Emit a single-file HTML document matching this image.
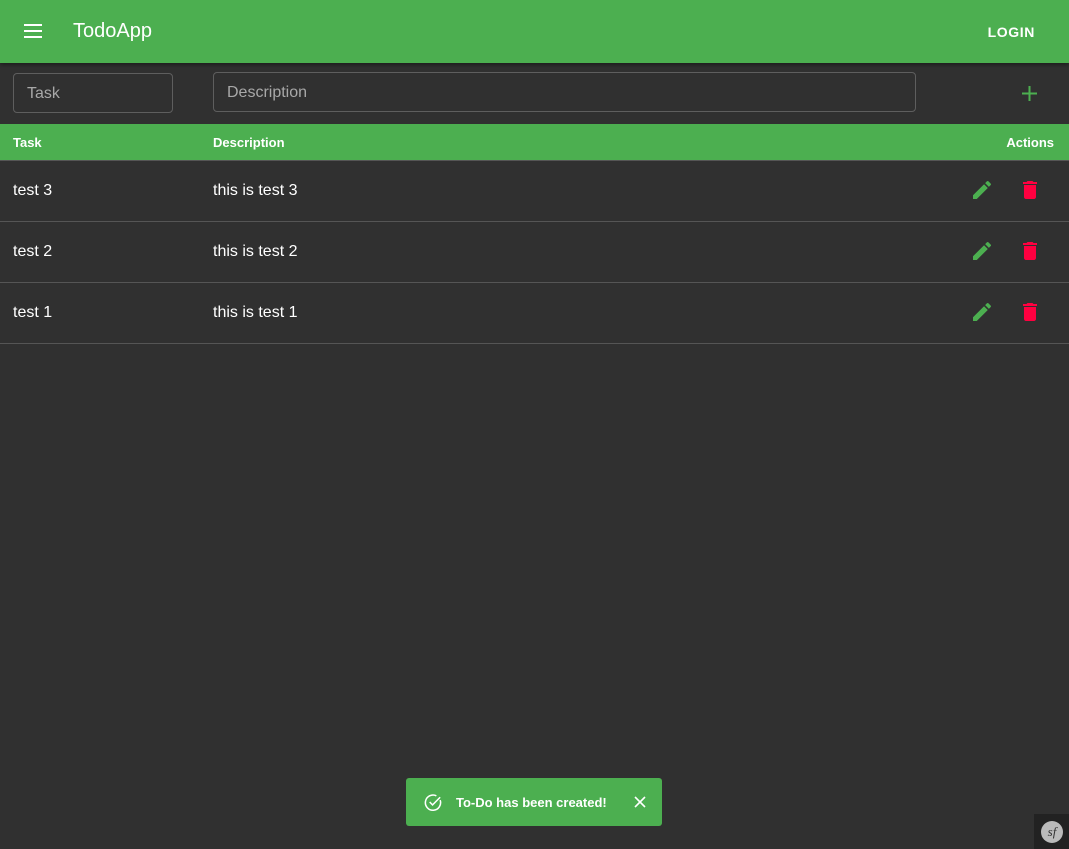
<!DOCTYPE html>
<html><head><meta charset="utf-8"><style>
*{box-sizing:border-box;margin:0;padding:0}
body{width:1069px;height:849px;background:#303030;font-family:"Liberation Sans",sans-serif;color:#fff;position:relative;overflow:hidden}
.bar{position:absolute;left:0;top:0;width:1069px;height:63px;background:#4caf50;box-shadow:0 2px 4px rgba(0,0,0,.4)}
.title{position:absolute;left:73px;top:20px;font-size:20px;font-weight:500}
.login{position:absolute;right:34px;top:24px;font-size:14px;font-weight:bold;letter-spacing:.6px}
.inp{position:absolute;border:1px solid #5e5e5e;border-radius:4px;height:40px;color:#a8a8a8;font-size:16px;padding:11px 13px}
.th{position:absolute;left:0;top:124px;width:1069px;height:37px;background:#4caf50;border-bottom:1px solid #555;font-size:13px;font-weight:bold}
.th span{position:absolute;top:11px}
.row{position:absolute;left:0;width:1069px;height:61px;border-bottom:1px solid #555;font-size:16px}
.row span{position:absolute;top:21px}
.row svg{position:absolute;top:17px}
.toast{position:absolute;left:406px;top:778px;width:256px;height:48px;background:#4caf50;border-radius:3px;font-size:13px;font-weight:bold}
</style></head><body>
<div class="bar">
<svg style="position:absolute;left:24px;top:24px" width="18" height="14" viewBox="0 0 18 14"><rect y="0" width="18" height="2" fill="#fff"/><rect y="6" width="18" height="2" fill="#fff"/><rect y="12" width="18" height="2" fill="#fff"/></svg>
<div class="title">TodoApp</div><div class="login">LOGIN</div></div>
<div class="inp" style="left:13px;top:73px;width:160px">Task</div>
<div class="inp" style="left:213px;top:72px;width:703px">Description</div>
<svg style="position:absolute;left:1022px;top:86px" width="15" height="15" viewBox="0 0 15 15"><rect x="6.5" width="2" height="15" fill="#4caf50"/><rect y="6.5" width="15" height="2" fill="#4caf50"/></svg>
<div class="th"><span style="left:13px">Task</span><span style="left:213px">Description</span><span style="right:15px">Actions</span></div>
<div class="row" style="top:161px"><span style="left:13px">test 3</span><span style="left:213px">this is test 3</span>
<svg style="left:970px" width="24" height="24" viewBox="0 0 24 24"><path fill="#4caf50" d="M3 17.25V21h3.75L17.81 9.94l-3.75-3.75L3 17.25zM20.710 7.04a1 1 0 000-1.41l-2.34-2.34a1 1 0 00-1.41 0l-1.830 1.83 3.75 3.75 1.83-1.83z"/></svg>
<svg style="left:1018px" width="24" height="24" viewBox="0 0 24 24"><path fill="#ff0040" d="M6 19c0 1.1.9 2 2 2h8c1.1 0 2-.9 2-2V7H6v12zM19 4h-3.5l-1-1h-5l-1 1H5v2h14V4z"/></svg></div>
<div class="row" style="top:222px"><span style="left:13px">test 2</span><span style="left:213px">this is test 2</span>
<svg style="left:970px" width="24" height="24" viewBox="0 0 24 24"><path fill="#4caf50" d="M3 17.25V21h3.75L17.81 9.94l-3.75-3.75L3 17.25zM20.71 7.04a1 1 0 000-1.41l-2.34-2.34a1 1 0 00-1.41 0l-1.83 1.83 3.75 3.75 1.83-1.83z"/></svg>
<svg style="left:1018px" width="24" height="24" viewBox="0 0 24 24"><path fill="#ff0040" d="M6 19c0 1.1.9 2 2 2h8c1.1 0 2-.9 2-2V7H6v12zM19 4h-3.5l-1-1h-5l-1 1H5v2h14V4z"/></svg></div>
<div class="row" style="top:283px"><span style="left:13px">test 1</span><span style="left:213px">this is test 1</span>
<svg style="left:970px" width="24" height="24" viewBox="0 0 24 24"><path fill="#4caf50" d="M3 17.25V21h3.75L17.81 9.94l-3.75-3.75L3 17.25zM20.71 7.04a1 1 0 000-1.41l-2.34-2.34a1 1 0 00-1.41 0l-1.83 1.83 3.75 3.75 1.83-1.83z"/></svg>
<svg style="left:1018px" width="24" height="24" viewBox="0 0 24 24"><path fill="#ff0040" d="M6 19c0 1.1.9 2 2 2h8c1.1 0 2-.9 2-2V7H6v12zM19 4h-3.5l-1-1h-5l-1 1H5v2h14V4z"/></svg></div>
<div class="toast">
<svg style="position:absolute;left:18px;top:15px" width="19" height="19" viewBox="0 0 20 20"><path d="M17 7.5A8 8 0 1 1 13 3" fill="none" stroke="#fff" stroke-width="1.6"/><path d="M6 9.5l3 3 8-8" fill="none" stroke="#fff" stroke-width="1.6"/></svg>
<span style="position:absolute;left:50px;top:17px">To-Do has been created!</span>
<svg style="position:absolute;left:228px;top:18px" width="12" height="12" viewBox="0 0 12 12"><path d="M1 1l10 10M11 1L1 11" stroke="#fff" stroke-width="1.6"/></svg>
</div>
<div style="position:absolute;left:1034px;top:814px;width:35px;height:35px;background:#222">
<div style="position:absolute;left:7px;top:7px;width:22px;height:22px;border-radius:50%;background:#bbb;color:#333;font-family:'Liberation Serif',serif;font-style:italic;font-size:13px;text-align:center;line-height:22px">sf</div></div>
</body></html>
